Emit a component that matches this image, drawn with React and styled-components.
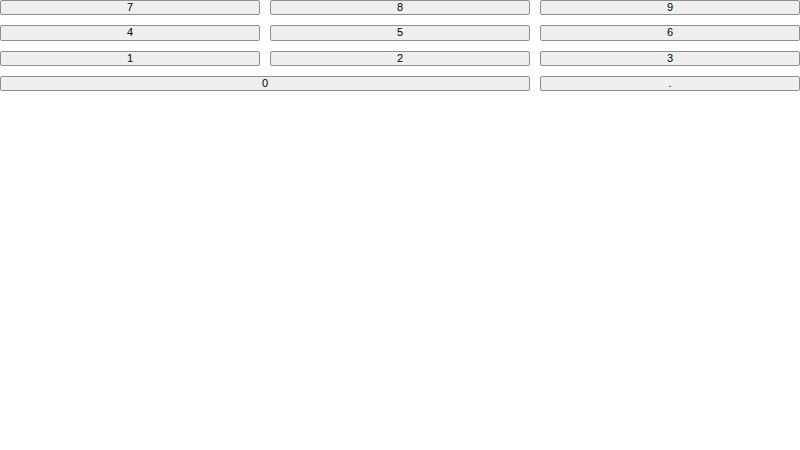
import React from 'react';
import styled, { createGlobalStyle } from 'styled-components';

const GlobalStyle = createGlobalStyle`
  body {
    margin: 0;
    background: #ffffff;
    font-family: "Liberation Sans", Arial, sans-serif;
  }
`;

const keys = [
  { label: '7' }, { label: '8' }, { label: '9' },
  { label: '4' }, { label: '5' }, { label: '6' },
  { label: '1' }, { label: '2' }, { label: '3' },
  { label: '0', span: 2 }, { label: '.' },
];

export default function App() {
  return (
    <>
      <GlobalStyle />
      <Keypad>
        {keys.map(k => (
          <Key key={k.label} $span={k.span}>{k.label}</Key>
        ))}
      </Keypad>
    </>
  );
}

const Keypad = styled.div`
  display: grid;
  grid-template-columns: repeat(3, 1fr);
  grid-auto-rows: 15.33px;
  column-gap: 10px;
  row-gap: 10px;
`;

const Key = styled.button`
  grid-column: span ${p => p.$span || 1};
  box-sizing: border-box;
  height: 100%;
  margin: 0;
  padding: 0;
  font-family: "Liberation Sans", Arial, sans-serif;
  font-size: 11px;
  line-height: 1;
  color: #000;
  background: #efefef;
  border: 1px solid #8f8f8f;
  border-radius: 2px;
`;
